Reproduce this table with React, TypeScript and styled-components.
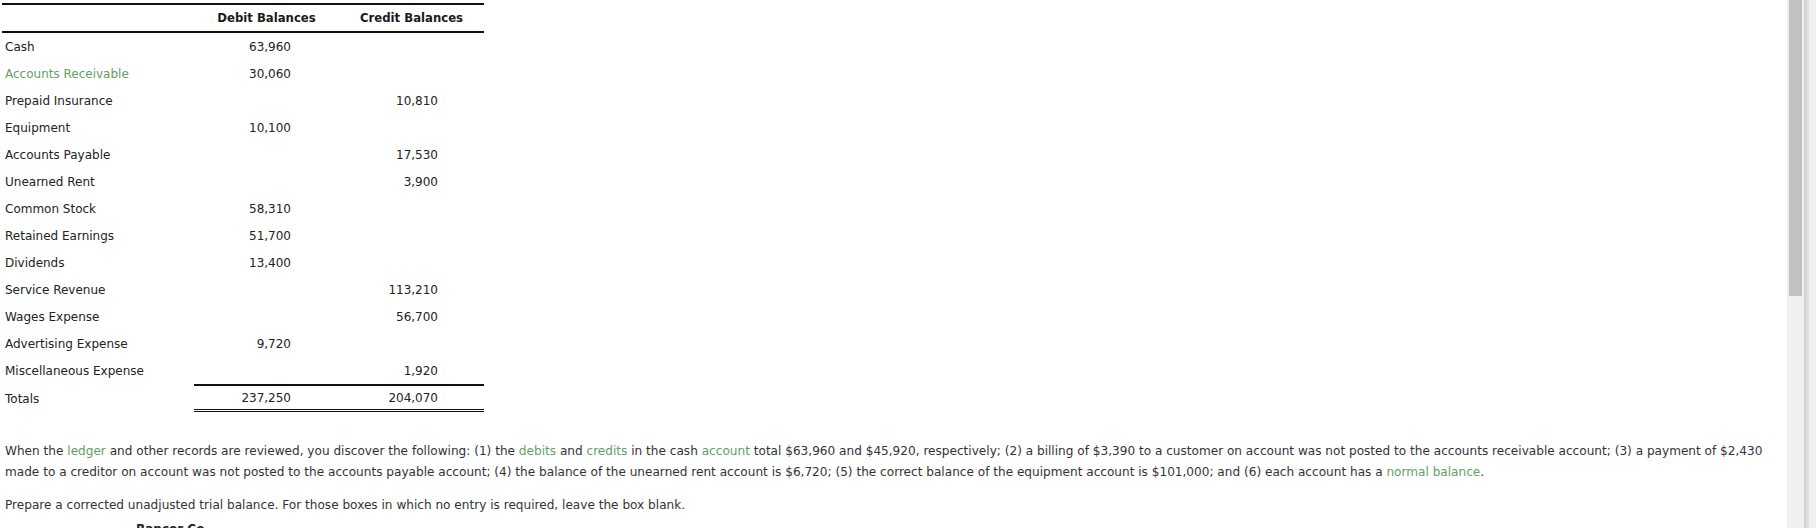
import styled, { createGlobalStyle } from "styled-components";

const rows = [
    { id: 1, label: "Cash", debit: "63,960", credit: "" },
    { id: 2, label: "Accounts Receivable", debit: "30,060", credit: "", term: true },
    { id: 3, label: "Prepaid Insurance", debit: "", credit: "10,810" },
    { id: 4, label: "Equipment", debit: "10,100", credit: "" },
    { id: 5, label: "Accounts Payable", debit: "", credit: "17,530" },
    { id: 6, label: "Unearned Rent", debit: "", credit: "3,900" },
    { id: 7, label: "Common Stock", debit: "58,310", credit: "" },
    { id: 8, label: "Retained Earnings", debit: "51,700", credit: "" },
    { id: 9, label: "Dividends", debit: "13,400", credit: "" },
    { id: 10, label: "Service Revenue", debit: "", credit: "113,210" },
    { id: 11, label: "Wages Expense", debit: "", credit: "56,700" },
    { id: 12, label: "Advertising Expense", debit: "9,720", credit: "" },
    { id: 13, label: "Miscellaneous Expense", debit: "", credit: "1,920" },
];

const GlobalStyle = createGlobalStyle`
    html, body {
        margin: 0;
        padding: 0;
        background: #fff;
        overflow: hidden;
    }
    body {
        font-family: "DejaVu Sans", Verdana, sans-serif;
        font-size: 12px;
        color: #222;
    }
`;

const Page = styled.div`
    display: flex;
    width: 1816px;
    height: 528px;
    overflow: hidden;
`;

const Content = styled.div`
    flex: 1;
    padding: 3px 0 0 2px;
    background: #fff;
    overflow: hidden;
`;

const Table = styled.table`
    border-collapse: separate;
    border-spacing: 0;
    width: 482px;
    table-layout: fixed;
`;

const HeadCell = styled.th<{ $w: number }>`
    width: ${(p) => p.$w}px;
    height: 26px;
    padding: 0;
    border-top: 2px solid #111;
    border-bottom: 2px solid #111;
    font-weight: bold;
    font-size: 11.7px;
    color: #1a1a1a;
    text-align: center;
    vertical-align: middle;
`;

const Label = styled.td<{ $term?: boolean }>`
    height: 27px;
    padding: 0 0 0 3px;
    line-height: 14px;
    color: ${(p) => (p.$term ? "#62a065" : "#222")};
    white-space: nowrap;
    vertical-align: middle;
`;

const Amount = styled.td<{ $pad: number; $top?: boolean; $bottom?: boolean }>`
    padding: 0 ${(p) => p.$pad}px 0 0;
    line-height: 14px;
    text-align: right;
    vertical-align: middle;
    border-top: ${(p) => (p.$top ? "2px solid #111" : "none")};
    border-bottom: ${(p) => (p.$bottom ? "3px double #111" : "none")};
`;

const TotalLabel = styled(Label)`
    height: 26px;
    padding-top: 2px;
`;

const Paragraph = styled.p`
    margin: 29px 0 0 3px;
    font-size: 12.1px;
    line-height: 21px;
    color: #333;
    padding-right: 20px;
`;

const Note = styled(Paragraph)`
    margin-top: 12px;
`;

const Term = styled.span`
    color: #62a065;
`;

const Title = styled.div`
    margin: 3px 0 0 134px;
    font-weight: bold;
    color: #222;
    line-height: 21px;
`;

const Scrollbar = styled.div`
    display: flex;
    width: 29px;
    height: 100%;
`;

const Track = styled.div`
    width: 17px;
    background: #f0f0f0;
    padding: 0 2px;
    box-sizing: border-box;
`;

const Thumb = styled.div`
    height: 296px;
    background: #c1c1c1;
`;

const Divider = styled.div`
    width: 5px;
    background: linear-gradient(to right, #cfcfcf, #e4e4e4);
`;

const Edge = styled.div`
    flex: 1;
    background: #f0f0f0;
`;

function App() {
    return (
        <Page>
            <GlobalStyle />
            <Content>
                <Table>
                    <thead>
                        <tr>
                            <HeadCell $w={192}></HeadCell>
                            <HeadCell $w={145}>Debit Balances</HeadCell>
                            <HeadCell $w={145}>Credit Balances</HeadCell>
                        </tr>
                    </thead>
                    <tbody>
                        {rows.map(({ id, label, debit, credit, term }) => (
                            <tr key={id}>
                                <Label $term={term}>{label}</Label>
                                <Amount $pad={48}>{debit}</Amount>
                                <Amount $pad={46}>{credit}</Amount>
                            </tr>
                        ))}
                        <tr>
                            <TotalLabel>Totals</TotalLabel>
                            <Amount $pad={48} $top $bottom>
                                237,250
                            </Amount>
                            <Amount $pad={46} $top $bottom>
                                204,070
                            </Amount>
                        </tr>
                    </tbody>
                </Table>
                <Paragraph>
                    When the <Term>ledger</Term> and other records are
                    reviewed, you discover the following: (1) the{" "}
                    <Term>debits</Term> and <Term>credits</Term> in the cash{" "}
                    <Term>account</Term> total $63,960 and $45,920,
                    respectively; (2) a billing of $3,390 to a customer on
                    account was not posted to the accounts receivable account;
                    (3) a payment of $2,430 made to a creditor on account was
                    not posted to the accounts payable account; (4) the balance
                    of the unearned rent account is $6,720; (5) the correct
                    balance of the equipment account is $101,000; and (6) each
                    account has a <Term>normal balance</Term>.
                </Paragraph>
                <Note>
                    Prepare a corrected unadjusted trial balance. For those
                    boxes in which no entry is required, leave the box blank.
                </Note>
                <Title>Rancor Co.</Title>
            </Content>
            <Scrollbar>
                <Track>
                    <Thumb />
                </Track>
                <Divider />
                <Edge />
            </Scrollbar>
        </Page>
    );
}

export default App;
